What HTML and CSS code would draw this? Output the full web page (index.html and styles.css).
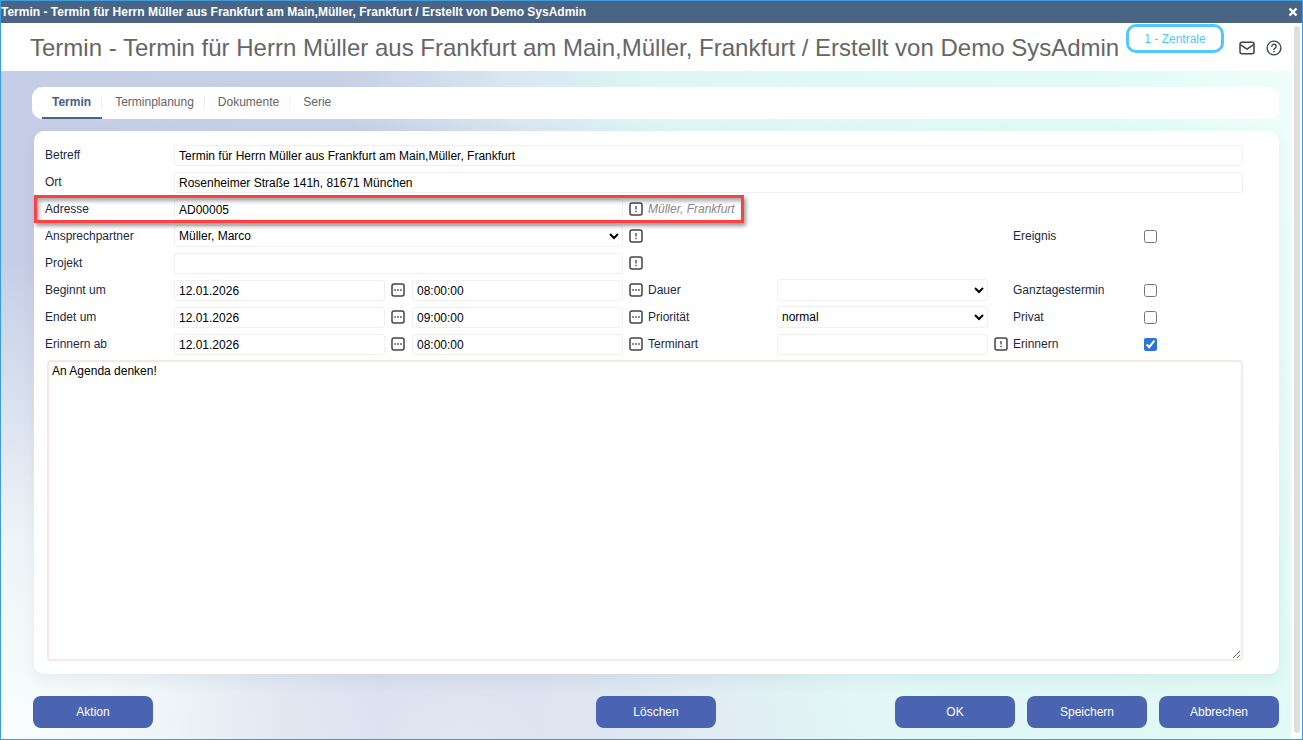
FILE: index.html
```html
<!DOCTYPE html>
<html lang="de">
<head>
    <meta charset="UTF-8">
    <meta name="viewport" content="width=device-width, initial-scale=1.0">
    <title>Termin</title>
    <link rel="stylesheet" href="styles.css">
</head>
<body>
    <!-- Icon templates -->
    <svg class="sprite" aria-hidden="true">
        <symbol id="icon-info" viewBox="0 0 14 14">
            <rect x="1" y="1" width="12" height="12" rx="2" fill="none" stroke="#444" stroke-width="1.5"/>
            <path d="M7 4v3.6M7 8.8v1.4" stroke="#444" stroke-width="1.3"/>
        </symbol>
        <symbol id="icon-more" viewBox="0 0 14 14">
            <rect x="1" y="1" width="12" height="12" rx="2" fill="none" stroke="#444" stroke-width="1.5"/>
            <path d="M3.3 7h1.5M6.2 7h1.5M9.2 7h1.5" stroke="#333" stroke-width="1.5"/>
        </symbol>
    </svg>

    <div class="window">
        <div class="titlebar">
            <span>Termin - Termin für Herrn Müller aus Frankfurt am Main,Müller, Frankfurt / Erstellt von Demo SysAdmin</span>
            <button type="button" class="close" aria-label="Schließen">
                <svg viewBox="0 0 10 10"><path d="M1.5 1.5l7 7M8.5 1.5l-7 7" stroke="#fff" stroke-width="2.4"/></svg>
            </button>
        </div>

        <div class="frame">
            <div class="page">
                <header class="header">
                    <h1>Termin - Termin für Herrn Müller aus Frankfurt am Main,Müller, Frankfurt / Erstellt von Demo SysAdmin</h1>
                    <button type="button" class="badge">1 - Zentrale</button>
                    <div class="header-icons">
                        <button type="button" class="icon-btn" aria-label="E-Mail">
                            <svg viewBox="0 0 16 16" fill="none" stroke="#3d4357" stroke-width="1.5" stroke-linejoin="round"><rect x="1" y="2.2" width="14" height="11.6" rx="2"/><path d="M1.3 4.6L8 9.2l6.7-4.6"/></svg>
                        </button>
                        <button type="button" class="icon-btn" aria-label="Hilfe">
                            <svg viewBox="0 0 16 16" fill="none" stroke="#3d4357" stroke-width="1.4" stroke-linecap="round"><circle cx="8" cy="8" r="6.9"/><path d="M5.9 6.3a2.1 2.1 0 1 1 3.2 1.8c-.7.4-1.1.7-1.1 1.3"/><path d="M8 11.5v.1" stroke-width="1.7"/></svg>
                        </button>
                    </div>
                </header>

                <main class="content">
                    <nav class="tabs">
                        <a href="#termin" class="tab active">Termin</a>
                        <a href="#terminplanung" class="tab">Terminplanung</a>
                        <a href="#dokumente" class="tab">Dokumente</a>
                        <a href="#serie" class="tab">Serie</a>
                    </nav>

                    <form class="card" id="termin-form">
                        <div class="row">
                            <label for="betreff">Betreff</label>
                            <input class="field full" type="text" id="betreff" value="Termin für Herrn Müller aus Frankfurt am Main,Müller, Frankfurt">
                        </div>
                        <div class="row">
                            <label for="ort">Ort</label>
                            <input class="field full" type="text" id="ort" value="Rosenheimer Straße 141h, 81671 München">
                        </div>
                        <div class="row">
                            <label for="adresse">Adresse</label>
                            <input class="field wide" type="text" id="adresse" value="AD00005">
                            <button type="button" class="pick" aria-label="Adresse wählen"><svg><use href="#icon-info"/></svg></button>
                            <em class="hint">Müller, Frankfurt</em>
                            <div class="highlight"></div>
                        </div>
                        <div class="row">
                            <label for="partner">Ansprechpartner</label>
                            <select class="field wide" id="partner"><option>Müller, Marco</option></select>
                            <button type="button" class="pick" aria-label="Ansprechpartner wählen"><svg><use href="#icon-info"/></svg></button>
                            <label class="check-label" for="ereignis">Ereignis</label>
                            <input type="checkbox" id="ereignis">
                        </div>
                        <div class="row">
                            <label for="projekt">Projekt</label>
                            <input class="field wide" type="text" id="projekt">
                            <button type="button" class="pick" aria-label="Projekt wählen"><svg><use href="#icon-info"/></svg></button>
                        </div>
                        <div class="row">
                            <label for="beginn">Beginnt um</label>
                            <input class="field" type="text" id="beginn" value="12.01.2026">
                            <button type="button" class="pick date-pick" aria-label="Datum wählen"><svg><use href="#icon-more"/></svg></button>
                            <input class="field" type="text" aria-label="Beginnt um Uhrzeit" value="08:00:00">
                            <button type="button" class="pick" aria-label="Uhrzeit wählen"><svg><use href="#icon-more"/></svg></button>
                            <label for="dauer">Dauer</label>
                            <select class="field" id="dauer"><option></option></select>
                            <label class="check-label" for="ganztag">Ganztagestermin</label>
                            <input type="checkbox" id="ganztag">
                        </div>
                        <div class="row">
                            <label for="ende">Endet um</label>
                            <input class="field" type="text" id="ende" value="12.01.2026">
                            <button type="button" class="pick date-pick" aria-label="Datum wählen"><svg><use href="#icon-more"/></svg></button>
                            <input class="field" type="text" aria-label="Endet um Uhrzeit" value="09:00:00">
                            <button type="button" class="pick" aria-label="Uhrzeit wählen"><svg><use href="#icon-more"/></svg></button>
                            <label for="prioritaet">Priorität</label>
                            <select class="field" id="prioritaet"><option>normal</option></select>
                            <label class="check-label" for="privat">Privat</label>
                            <input type="checkbox" id="privat">
                        </div>
                        <div class="row">
                            <label for="erinnern-ab">Erinnern ab</label>
                            <input class="field" type="text" id="erinnern-ab" value="12.01.2026">
                            <button type="button" class="pick date-pick" aria-label="Datum wählen"><svg><use href="#icon-more"/></svg></button>
                            <input class="field" type="text" aria-label="Erinnern ab Uhrzeit" value="08:00:00">
                            <button type="button" class="pick" aria-label="Uhrzeit wählen"><svg><use href="#icon-more"/></svg></button>
                            <label for="terminart">Terminart</label>
                            <input class="field" type="text" id="terminart">
                            <button type="button" class="pick" aria-label="Terminart wählen"><svg><use href="#icon-info"/></svg></button>
                            <label class="check-label" for="erinnern">Erinnern</label>
                            <input type="checkbox" id="erinnern" checked>
                        </div>
                        <textarea class="notes" aria-label="Notiz">An Agenda denken!</textarea>
                    </form>

                    <footer class="actions">
                        <div><button type="button" class="btn">Aktion</button></div>
                        <button type="button" class="btn">Löschen</button>
                        <div class="actions-right">
                            <button type="submit" form="termin-form" class="btn">OK</button>
                            <button type="button" class="btn">Speichern</button>
                            <button type="button" class="btn">Abbrechen</button>
                        </div>
                    </footer>
                </main>
            </div>
            <div class="scrollbar"><div class="thumb"></div></div>
        </div>
    </div>
</body>
</html>
```
FILE: styles.css
```css
* {
    box-sizing: border-box;
}
body {
    margin: 0;
    font-family: "Liberation Sans", Arial, sans-serif;
    font-size: 12px;
    color: #1c2942;
    background: #fff;
}
button,
input,
select,
textarea {
    font: inherit;
    margin: 0;
}
button {
    padding: 0;
    border: none;
    background: none;
    cursor: pointer;
}
svg {
    display: block;
}
.sprite {
    display: none;
}
.window {
    display: flex;
    flex-direction: column;
    min-height: 100vh;
    border: 1px solid #3d9be0;
}
.titlebar {
    display: flex;
    align-items: center;
    justify-content: space-between;
    height: 22px;
    padding-right: 4px;
    background: #4a6583;
    color: #fff;
    font-weight: bold;
}
.close svg {
    width: 10px;
    height: 10px;
}
.frame {
    display: flex;
    flex: 1;
}
.page {
    display: flex;
    flex-direction: column;
    flex: 1;
    min-width: 0;
}
.scrollbar {
    display: flex;
    width: 11px;
    padding: 3px 2px 6px 3px;
}
.thumb {
    flex: 1;
    border-radius: 3px;
    background: #dedede;
}

/* Header */
.header {
    display: flex;
    align-items: flex-start;
    height: 48px;
    padding: 1px 9px 0 29px;
}
.header h1 {
    margin: 0;
    color: #666;
    font-size: 24px;
    font-weight: normal;
    line-height: 48px;
    white-space: nowrap;
}
.badge {
    width: 98px;
    height: 29px;
    margin-left: auto;
    border: 3px solid #4fc8fb;
    border-radius: 10px;
    color: #4fc8fb;
}
.header-icons {
    display: flex;
    align-items: center;
    gap: 11px;
    height: 48px;
    margin-left: 15px;
}
.icon-btn svg {
    width: 16px;
    height: 16px;
}

/* Content */
.content {
    display: flex;
    flex-direction: column;
    flex: 1;
    padding: 16px 12px 11px 31px;
    background:
        radial-gradient(ellipse 380px 480px at 0 100%, #f9fdfc 0%, rgba(246, 252, 251, 0.85) 40%, rgba(246, 252, 251, 0) 100%),
        radial-gradient(ellipse 520px 320px at 36% 100%, rgba(244, 246, 249, 0.6) 0%, rgba(244, 246, 249, 0) 100%),
        linear-gradient(73deg, #c5cde6 0%, #c6cfe6 36%, #d8e6f0 47%, #def7f5 58%, #e1faf5 86%, #effefb 100%);
}
.tabs {
    display: flex;
    height: 32px;
    padding: 0 10px;
    border-radius: 10px;
    background: #fff;
}
.tab {
    display: flex;
    align-items: center;
    height: 32px;
    padding: 0 11px 2px 13px;
    color: #666;
    line-height: 14px;
    text-decoration: none;
    background: linear-gradient(#eee, #eee) no-repeat right 9px / 1px 13px;
}
.tab:last-child {
    background: none;
}
.tab.active {
    padding: 0 11px 0 10px;
    border-bottom: 2px solid #4a6583;
    color: #45608a;
    font-weight: bold;
}
.card {
    display: flex;
    flex-direction: column;
    flex: 1;
    margin: 12px 0 0 2px;
    padding: 11px 36px 13px 11px;
    border-radius: 10px;
    background: #fff;
    box-shadow: 0 6px 14px rgba(60, 100, 120, 0.08);
}
.row {
    display: grid;
    grid-template-columns: 129px 1fr 27px 1fr 25px 129px 1fr 25px 131px 99px;
    grid-template-rows: 27px;
    align-items: center;
}
.row > * {
    grid-row: 1;
}
.row label {
    padding-bottom: 1px;
    line-height: 14px;
}
.row label:first-child {
    grid-column: 1;
}
.field {
    width: 100%;
    height: 21px;
    padding: 1px 4px;
    border: 1px solid #f0f0f0;
    border-radius: 3px;
    background: #fff;
    color: #000;
}
select.field {
    height: 22px;
    margin-bottom: 2px;
    padding: 0;
}
.full {
    grid-column: 2 / -1;
}
.wide {
    grid-column: 2 / 5;
}
.pick {
    justify-self: end;
    margin: 0 5px 2px 0;
}
.date-pick {
    margin-right: 7px;
}
.wide + .pick {
    grid-column: 5;
}
.pick svg {
    width: 14px;
    height: 14px;
}
.hint {
    grid-column: 6;
    padding-bottom: 1px;
    color: #888;
    line-height: 14px;
}
.row .check-label {
    grid-column: 9;
}
.row input[type="checkbox"] {
    grid-column: 10;
    width: 13px;
    height: 13px;
    accent-color: #2f73d8;
}
.highlight {
    grid-column: 1 / 7;
    z-index: 1;
    height: 28px;
    margin: 0 33px 1px -11px;
    border: 3px solid #f94343;
    box-shadow: 2px 3px 4px rgba(0, 0, 0, 0.4), inset 2px 3px 4px rgba(0, 0, 0, 0.35);
    pointer-events: none;
}
.notes {
    flex: 1;
    min-height: 120px;
    margin: 2px 0 0 2px;
    padding: 2px 3px;
    border: 2px solid #fbe6e4;
    border-radius: 4px;
    color: #000;
    resize: vertical;
}

/* Footer buttons */
.actions {
    display: grid;
    grid-template-columns: 1fr auto 1fr;
    margin-top: 22px;
    padding-left: 1px;
}
.actions-right {
    display: flex;
    justify-content: flex-end;
    gap: 12px;
}
.btn {
    width: 120px;
    height: 32px;
    border-radius: 8px;
    background: #4a64b1;
    color: #fff;
}
```
